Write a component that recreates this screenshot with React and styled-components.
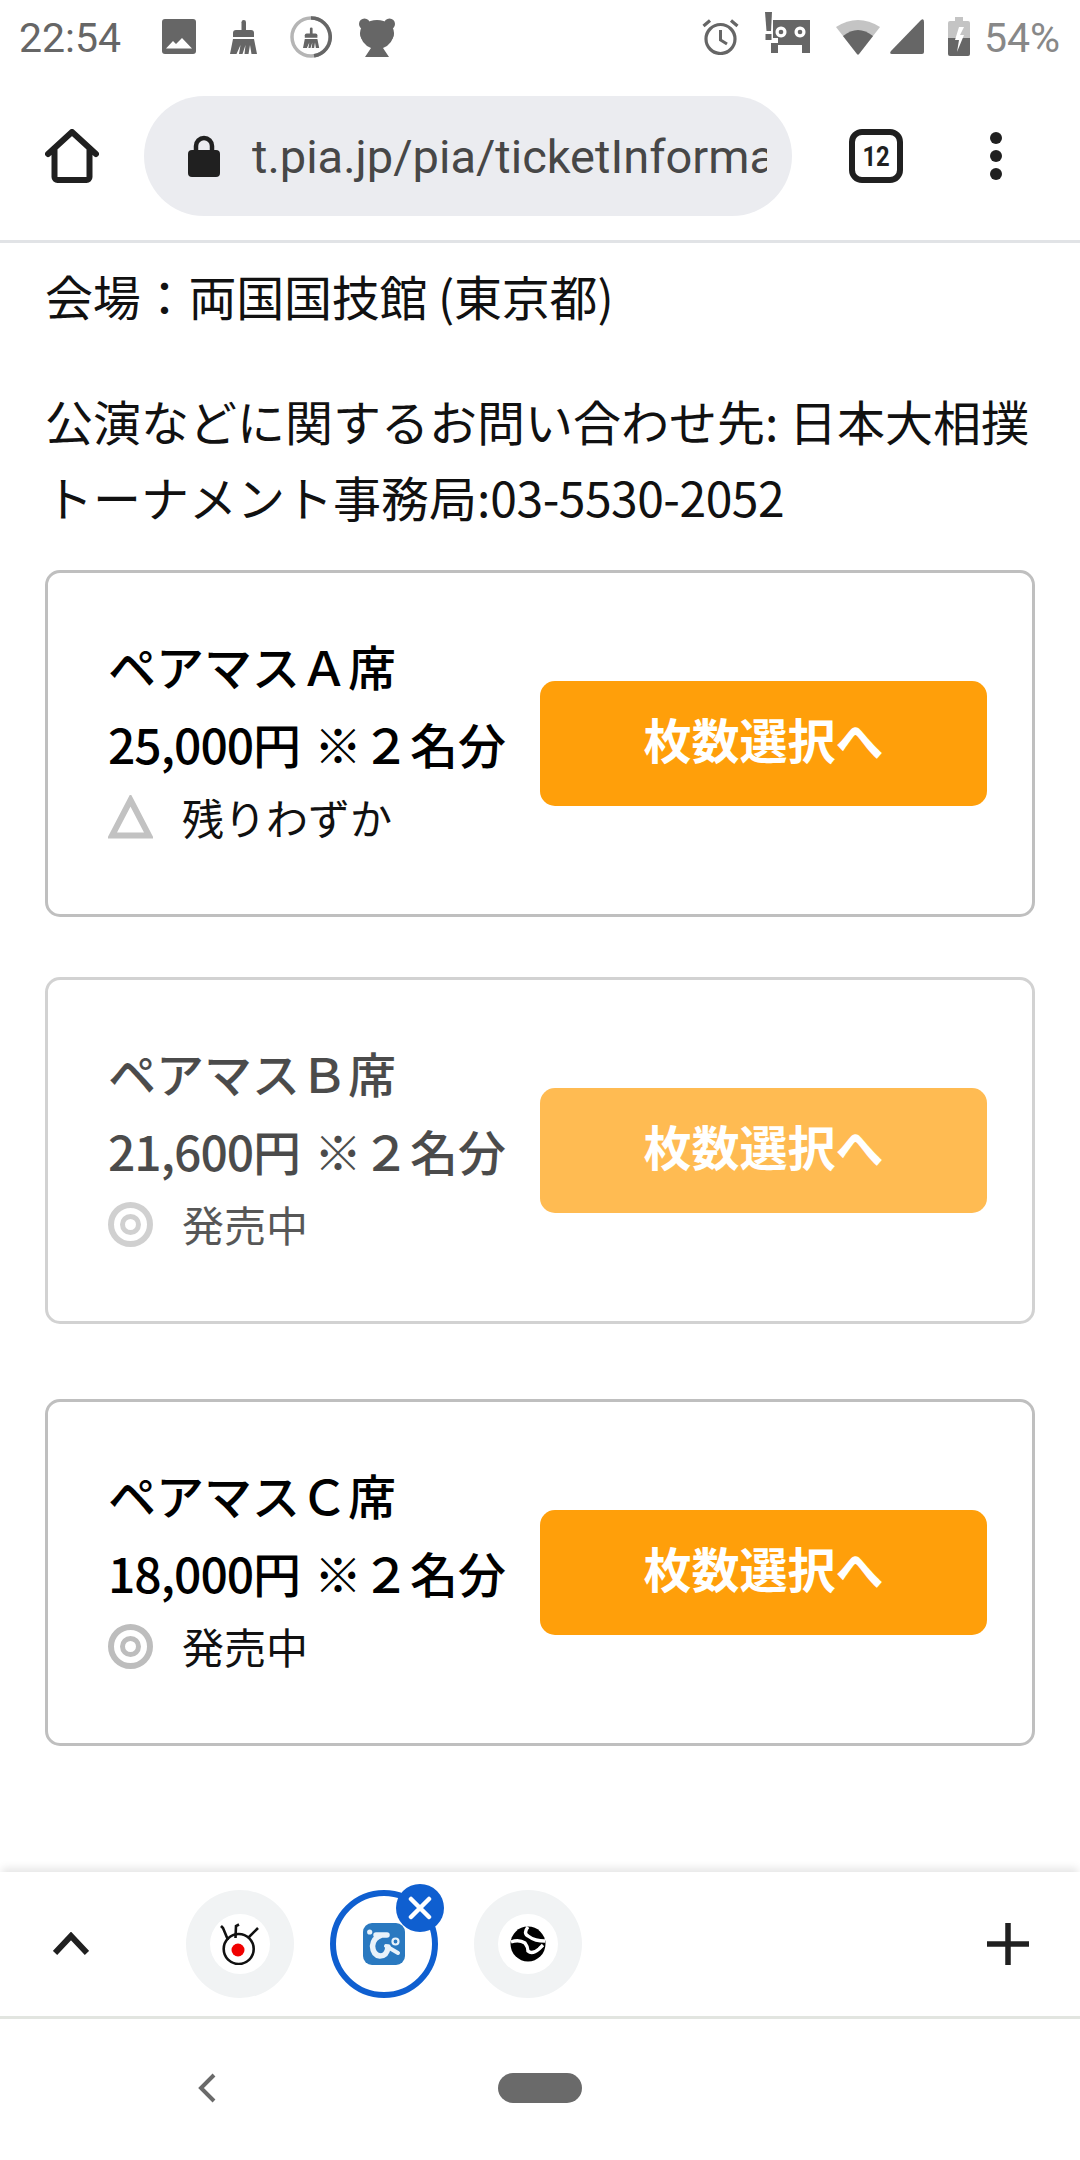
import React from "react";
import styled, { createGlobalStyle } from "styled-components";

const Global = createGlobalStyle`
  html, body { margin: 0; padding: 0; background: #fff; }
  #root { width: 1080px; height: 2160px; }
`;

const Page = styled.div`
  width: 1080px;
  height: 2160px;
  display: flex;
  flex-direction: column;
  overflow: hidden;
  background: #fff;
  font-family: "Noto Sans CJK JP", "Noto Sans", sans-serif;
  color: #000;
`;

const StatusBar = styled.div`
  height: 76px;
  flex: none;
  display: flex;
  align-items: center;
  justify-content: space-between;
  padding: 0 20px 0 19px;
  box-sizing: border-box;
  font-family: Roboto, sans-serif;
  font-size: 41px;
`;
const StatusLeft = styled.div`
  display: flex;
  align-items: center;
  color: #666;
`;
const StatusRight = styled.div`
  display: flex;
  align-items: center;
  color: #888;
`;
const Time = styled.span`
  width: 143px;
`;
const StatusIcon = styled.svg`
  display: block;
  flex: none;
  margin-left: ${(p) => p.$ml || 0}px;
  margin-bottom: ${(p) => p.$mb ?? 3}px;
`;
const Battery = styled.span`
  margin-left: 14px;
`;

const Toolbar = styled.div`
  height: 167px;
  flex: none;
  box-sizing: border-box;
  border-bottom: 3px solid #e1e3e6;
  display: flex;
  align-items: flex-start;
  padding-top: 20px;
`;
const HomeButton = styled.div`
  width: 144px;
  height: 120px;
  flex: none;
  display: flex;
  align-items: center;
  justify-content: center;
`;
const Omnibox = styled.div`
  width: 648px;
  height: 120px;
  flex: none;
  border-radius: 60px;
  background: #ebecf0;
  display: flex;
  align-items: center;
  padding-left: 44px;
  box-sizing: border-box;
`;
const Url = styled.div`
  margin-left: 32px;
  width: 515px;
  overflow: hidden;
  white-space: nowrap;
  font-family: Roboto, sans-serif;
  font-size: 47px;
  color: #474747;
`;
const TabCounter = styled.div`
  width: 54px;
  height: 54px;
  margin-left: 57px;
  margin-top: 33px;
  flex: none;
  box-sizing: border-box;
  border: 6px solid #202020;
  border-radius: 13px;
  display: flex;
  align-items: center;
  justify-content: center;
  font-family: "Roboto", sans-serif;
  font-weight: 700;
  font-size: 28px;
  color: #202020;
`;
const TabCount = styled.span`
  display: block;
  transform: scaleX(0.85);
`;
const Dots = styled.div`
  margin-left: 87px;
  margin-top: 36px;
  display: flex;
  flex-direction: column;
  gap: 6px;
`;
const Dot = styled.span`
  width: 12px;
  height: 12px;
  border-radius: 50%;
  background: #202020;
`;

const Content = styled.main`
  flex: 1;
  min-height: 0;
  padding: 14px 29px 0 45px;
  overflow: hidden;
`;
const Info = styled.p`
  margin: ${(p) => p.$mt || 0}px 0 0;
  font-size: 48px;
  line-height: 76px;
  color: #111;
  letter-spacing: ${(p) => (p.$tight ? "-0.2px" : "0")};
`;
const Phone = styled.span`
  letter-spacing: -0.5px;
`;
const Digits = styled.span`
  letter-spacing: -1px;
  margin-right: 3px;
`;
const Card = styled.section`
  box-sizing: border-box;
  width: 990px;
  height: 347px;
  margin-top: ${(p) => p.$mt}px;
  border: 3px solid #bfbfbf;
  border-radius: 15px;
  display: flex;
  align-items: center;
  padding: 0 45px 0 60px;
  opacity: ${(p) => (p.$dim ? 0.7 : 1)};
`;
const CardText = styled.div`
  width: 432px;
  flex: none;
  padding-bottom: 8px;
`;
const SeatName = styled.div`
  font-size: 48px;
  line-height: 79px;
  font-weight: 500;
  white-space: nowrap;
`;
const Price = styled.div`
  font-size: 48px;
  line-height: 76px;
  font-weight: 500;
  white-space: nowrap;
`;
const Avail = styled.div`
  display: flex;
  align-items: center;
  gap: 29px;
  font-size: 42px;
  line-height: 72px;
  color: #111;
`;
const SelectButton = styled.button`
  width: 447px;
  height: 125px;
  flex: none;
  border: 0;
  border-radius: 15px;
  background: #ff9f0a;
  color: #fff;
  font-family: inherit;
  font-size: 48px;
  font-weight: 700;
  padding: 0 0 12px;
`;

const TabStrip = styled.div`
  height: 144px;
  flex: none;
  position: relative;
  display: flex;
  align-items: center;
  box-shadow: 0 -6px 8px -2px rgba(0, 0, 0, 0.1);
  background: #fff;
`;
const Chevron = styled.svg`
  flex: none;
  margin-left: 53px;
`;
const TabCircle = styled.div`
  width: 108px;
  height: 108px;
  box-sizing: border-box;
  flex: none;
  border-radius: 50%;
  position: relative;
  margin-left: ${(p) => p.$ml}px;
  background: ${(p) => (p.$active ? "#fff" : "#f1f3f4")};
  border: ${(p) => (p.$active ? "6px solid #0f5fd0" : "0")};
  display: flex;
  align-items: center;
  justify-content: center;
`;
const Favicon = styled.div`
  width: 60px;
  height: 60px;
  border-radius: 50%;
  background: #fff;
  display: flex;
  align-items: center;
  justify-content: center;
`;
const CloseBadge = styled.div`
  position: absolute;
  width: 48px;
  height: 48px;
  top: -12px;
  right: -12px;
  border-radius: 50%;
  background: #0f5fd0;
  display: flex;
  align-items: center;
  justify-content: center;
`;
const Plus = styled.svg`
  flex: none;
  margin-left: auto;
  margin-right: 51px;
`;
const NavBar = styled.nav`
  height: 144px;
  flex: none;
  box-sizing: border-box;
  border-top: 3px solid #e2e5e0;
  display: flex;
  align-items: flex-start;
  padding-top: 54px;
`;
const BackGlyph = styled.svg`
  margin-left: 198px;
  flex: none;
`;
const HomePill = styled.div`
  width: 84px;
  height: 30px;
  margin-left: 282px;
  border-radius: 15px;
  background: #6a6a6a;
`;

const Triangle = () => (
  <svg width="45" height="44" viewBox="0 0 45 44">
    <path d="M22.5 5 L41 40.5 H4 Z" fill="none" stroke="#c2c2c2" strokeWidth="6" />
  </svg>
);
const Target = () => (
  <svg width="45" height="45" viewBox="0 0 45 45">
    <circle cx="22.5" cy="22.5" r="19.5" fill="none" stroke="#bdbdbd" strokeWidth="6" />
    <circle cx="22.5" cy="22.5" r="8" fill="none" stroke="#bdbdbd" strokeWidth="5" />
  </svg>
);

const Ticket = ({ name, price, mark, label, dim, mt }) => (
  <Card $dim={dim} $mt={mt}>
    <CardText>
      <SeatName>{name}</SeatName>
      <Price>
        <Digits>{price}</Digits> ※２名分
      </Price>
      <Avail>
        {mark}
        <span>{label}</span>
      </Avail>
    </CardText>
    <SelectButton>枚数選択へ</SelectButton>
  </Card>
);

const Broom = ({ fill = "#666" }) => (
  <g fill={fill}>
    <rect x="11.5" y="0" width="4.5" height="12" rx="2.2" />
    <path d="M6 10 H21 a3 3 0 0 1 3 3 V17 H3 V13 a3 3 0 0 1 3-3Z" />
    <path d="M3 19 H24 L27 34 H21.5 L20 25 L18.5 34 H14.5 L15.5 25 L12.5 34 H9 L10.5 25 L6.5 34 H0 Z" />
  </g>
);

export default function App() {
  return (
    <Page>
      <Global />
      <StatusBar>
        <StatusLeft>
          <Time>22:54</Time>
          <StatusIcon width="34" height="35" viewBox="0 0 34 35">
            <rect width="34" height="35" rx="3" fill="#666" />
            <path d="M4 29.5 L11 22 L14 25 L20 19 L30 29.5 Z" fill="#fff" />
          </StatusIcon>
          <StatusIcon $ml={34} width="27" height="34" viewBox="0 0 27 34">
            <Broom />
          </StatusIcon>
          <StatusIcon $ml={33} width="42" height="42" viewBox="0 0 42 42">
            <circle cx="21" cy="21" r="19" fill="none" stroke="#b5b5b5" strokeWidth="3.5" />
            <path d="M21 2 A19 19 0 0 1 24 39.8" fill="none" stroke="#666" strokeWidth="3.5" />
            <g transform="translate(13 11.5) scale(0.6)">
              <Broom />
            </g>
          </StatusIcon>
          <StatusIcon $ml={26} width="38" height="40" viewBox="0 0 38 40">
            <circle cx="6.5" cy="7" r="5.5" fill="#666" />
            <circle cx="31.5" cy="7" r="5.5" fill="#666" />
            <ellipse cx="19" cy="16" rx="17" ry="13" fill="#666" />
            <path d="M2 16 Q3 27 13 31 L7 40 H31 L25 31 Q35 27 36 16Z" fill="#666" />
          </StatusIcon>
        </StatusLeft>
        <StatusRight>
          <StatusIcon width="37" height="37" viewBox="0 0 37 37">
            <circle cx="18.5" cy="21" r="14.5" fill="none" stroke="#666" strokeWidth="3.2" />
            <path d="M18.5 12 V22 L25 26" fill="none" stroke="#666" strokeWidth="3" />
            <path d="M1.5 8 L8 2.5 M35.5 8 L29 2.5" stroke="#666" strokeWidth="3.2" />
          </StatusIcon>
          <StatusIcon $ml={25} $mb={11} width="47" height="41" viewBox="0 0 47 41">
            <path d="M1 0 H8 L7 19 H2.5 Z" fill="#666" />
            <rect x="1.5" y="22" width="6" height="6" fill="#666" />
            <path fillRule="evenodd" fill="#666" d="M9 8 H46 V41 H38 V33 H14 V41 H7 V31 H14 V26 H9 Z M17 14.5 a5.5 5.5 0 1 0 .01 0Z M36 14.5 a5.5 5.5 0 1 0 .01 0Z" />
            <circle cx="17" cy="20" r="2.3" fill="#666" />
            <circle cx="36" cy="20" r="2.3" fill="#666" />
          </StatusIcon>
          <StatusIcon $ml={24} width="46" height="37" viewBox="0 0 46 37">
            <path d="M1 9 Q23 -5 45 9 L24 36 Q23 37 22 36 Z" fill="#c4c4c4" />
            <path d="M8 18 Q23 6 38 18 L24 36 Q23 37 22 36 Z" fill="#666" />
          </StatusIcon>
          <StatusIcon $ml={9} width="34" height="35" viewBox="0 0 34 35">
            <path d="M31 1 Q34 -1 34 3 V33 a2 2 0 0 1-2 2 H2 Q-1 35 1 32 Z" fill="#666" />
          </StatusIcon>
          <StatusIcon $ml={24} width="22" height="39" viewBox="0 0 22 39">
            <path d="M7 0 H15 V4 H20 a2 2 0 0 1 2 2 V21 H0 V6 a2 2 0 0 1 2-2 H7 Z" fill="#c4c4c4" />
            <path d="M0 21 H22 V37 a2 2 0 0 1-2 2 H2 a2 2 0 0 1-2-2Z" fill="#666" />
            <path d="M16 10 H11 L7 23 H11 L9 35 L16 18 H12 Z" fill="#fff" />
          </StatusIcon>
          <Battery>54%</Battery>
        </StatusRight>
      </StatusBar>

      <Toolbar>
        <HomeButton>
          <svg width="54" height="54" viewBox="0 0 54 54">
            <path d="M3 25 L27 3 L51 25 M9.5 20 V48 a3 3 0 0 0 3 3 H41.5 a3 3 0 0 0 3-3 V20" fill="none" stroke="#202020" strokeWidth="6" strokeLinecap="round" strokeLinejoin="round" />
          </svg>
        </HomeButton>
        <Omnibox>
          <svg width="32" height="42" viewBox="0 0 32 42">
            <path d="M8 16 V11 a8 8 0 0 1 16 0 V16" fill="none" stroke="#202020" strokeWidth="4.5" />
            <rect y="15" width="32" height="27" rx="4" fill="#202020" />
          </svg>
          <Url>t.pia.jp/pia/ticketInformation</Url>
        </Omnibox>
        <TabCounter>
          <TabCount>12</TabCount>
        </TabCounter>
        <Dots>
          <Dot />
          <Dot />
          <Dot />
        </Dots>
      </Toolbar>

      <Content>
        <Info $tight>会場：両国国技館 (東京都)</Info>
        <Info $mt={49}>
          公演などに関するお問い合わせ先: 日本大相撲
          <br />
          トーナメント事務局:<Phone>03-5530-2052</Phone>
        </Info>
        <Ticket mt={36} name="ペアマスＡ席" price="25,000円" label="残りわずか" mark={<Triangle />} />
        <Ticket mt={60} dim name="ペアマスＢ席" price="21,600円" label="発売中" mark={<Target />} />
        <Ticket mt={75} name="ペアマスＣ席" price="18,000円" label="発売中" mark={<Target />} />
      </Content>

      <TabStrip>
        <Chevron width="36" height="24" viewBox="0 0 36 24">
          <path d="M2 21 L18 4 L34 21" fill="none" stroke="#202020" strokeWidth="6" />
        </Chevron>
        <TabCircle $ml={97}>
          <Favicon>
            <svg width="40" height="42" viewBox="0 0 40 42">
              <circle cx="18.7" cy="26" r="15" fill="#fff" stroke="#111" strokeWidth="2.6" />
              <circle cx="18" cy="27" r="6.5" fill="#f00000" />
              <path d="M8 17 L3 5 L1 3 M15.5 15 L16 3 L19 1.5 M28 15 L38 5" fill="none" stroke="#111" strokeWidth="2.6" />
            </svg>
          </Favicon>
        </TabCircle>
        <TabCircle $active $ml={36}>
          <svg width="42" height="42" viewBox="0 0 42 42">
            <rect width="42" height="42" rx="9" fill="#2a79c0" />
            <circle cx="6.7" cy="9" r="2.6" fill="#e8f2fa" />
            <path d="M13 12 H24 M19 12 Q10 15 9.5 23 Q10 32 17 33 Q24 33 25 24" fill="none" stroke="#e8f2fa" strokeWidth="5.5" strokeLinecap="round" strokeLinejoin="round" />
            <path d="M23 23 L35 30" fill="none" stroke="#e8f2fa" strokeWidth="4" strokeLinecap="round" />
            <circle cx="32.5" cy="18.5" r="3" fill="none" stroke="#e8f2fa" strokeWidth="2.2" />
          </svg>
          <CloseBadge>
            <svg width="24" height="24" viewBox="0 0 24 24">
              <path d="M3 3 L21 21 M21 3 L3 21" stroke="#fff" strokeWidth="4.5" strokeLinecap="round" />
            </svg>
          </CloseBadge>
        </TabCircle>
        <TabCircle $ml={36}>
          <Favicon>
            <svg width="36" height="36" viewBox="0 0 36 36">
              <circle cx="18" cy="18" r="17.5" fill="#000" />
              <path d="M18 1 Q13 7 18 10 Q22 13 26 14 Q30 15 35 15 M1 16 Q9 13 15 17 Q18 21 18 25 Q22 29 29 23 L33 19" fill="none" stroke="#fff" strokeWidth="3.4" />
            </svg>
          </Favicon>
        </TabCircle>
        <Plus width="42" height="42" viewBox="0 0 42 42">
          <path d="M21 0 V42 M0 21 H42" stroke="#202020" strokeWidth="5.5" />
        </Plus>
      </TabStrip>
      <NavBar>
        <BackGlyph width="18" height="30" viewBox="0 0 18 30">
          <path d="M16 2 L3 15 L16 28" fill="none" stroke="#6a6a6a" strokeWidth="4" />
        </BackGlyph>
        <HomePill />
      </NavBar>
    </Page>
  );
}
